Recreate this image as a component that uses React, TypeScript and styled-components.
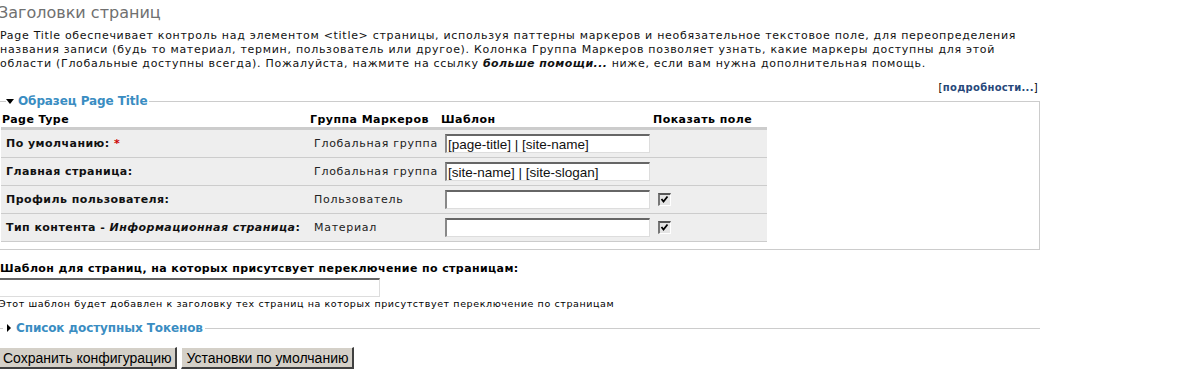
import React from 'react';
import styled, { createGlobalStyle } from 'styled-components';

const GlobalStyle = createGlobalStyle`
  body {
    margin: 0;
    background: #fff;
    color: #000;
    font-family: "DejaVu Sans", Verdana, sans-serif;
    font-size: 11px;
    letter-spacing: 0.7px;
  }

  b, strong, th {
    letter-spacing: 0.45px;
  }
`;

const Page = styled.div`
  width: 1042px;
  margin-left: -2px;
`;

const Title = styled.h2`
  margin: 0;
  padding-top: 3px;
  font-size: 16px;
  line-height: 20px;
  font-weight: normal;
  letter-spacing: 0;
  color: #707070;
`;

const Intro = styled.p`
  margin: 6px 0 0 2px;
  line-height: 14px;
  color: #111;
`;

const MoreRow = styled.div`
  margin-top: 10px;
  text-align: right;
  font-size: 10px;
  line-height: 13px;
  letter-spacing: 0.3px;
  padding-right: 2px;

  a {
    color: #27487a;
    font-weight: bold;
    text-decoration: none;
  }
`;

const Fieldset = styled.fieldset<{ $collapsed?: boolean }>`
  margin: ${(p) => (p.$collapsed ? '11px 0 0 0' : '0')};
  padding: ${(p) => (p.$collapsed ? '0' : '4px 2px 7px 2px')};
  border: 1px solid #ccc;
  border-width: ${(p) => (p.$collapsed ? '1px 0 0 0' : '1px')};
  min-width: 0;
`;

const Legend = styled.legend`
  margin-left: 5px;
  padding: 0 2px 0 0;
  font-size: 12px;
  line-height: 14px;
  font-weight: bold;
  letter-spacing: -0.1px;
  color: #3a8dc2;
  display: flex;
  align-items: center;
  gap: 4px;
`;

const Arrow = styled.span<{ $open?: boolean }>`
  display: inline-block;
  width: 0;
  height: 0;
  ${(p) =>
    p.$open
      ? `border-left: 4px solid transparent;
         border-right: 4px solid transparent;
         border-top: 5px solid #000;`
      : `border-top: 4px solid transparent;
         border-bottom: 4px solid transparent;
         border-left: 4px solid #000;
         margin-left: 4px;
         margin-right: 1px;`}
`;

const Table = styled.table`
  table-layout: fixed;
  border-collapse: collapse;
  width: 766px;
`;

const Th = styled.th`
  text-align: left;
  font-weight: bold;
  padding: 0 0 0 1px;
  height: 15px;
  line-height: 15px;
  border-bottom: 3px solid #ccc;
  white-space: nowrap;
`;

const Row = styled.tr`
  background: #eee;
  border-bottom: 1px solid #ccc;
`;

const Td = styled.td<{ $label?: boolean }>`
  height: 27px;
  padding: 0 0 0 5px;
  vertical-align: middle;
  white-space: nowrap;
  font-weight: ${(p) => (p.$label ? 'bold' : 'normal')};
  letter-spacing: ${(p) => (p.$label ? '0.45px' : '0.7px')};
  color: ${(p) => (p.$label ? '#111' : '#222')};
`;

const Required = styled.span`
  color: #c00;
`;

const TextInput = styled.input<{ $width: number }>`
  box-sizing: border-box;
  width: ${(p) => p.$width}px;
  height: 19px;
  padding: 0 1px;
  margin: 0;
  border-style: solid;
  border-width: 2px 1px 1px 2px;
  border-color: #666 #ddd #ddd #888;
  background: #fff;
  font-family: "Liberation Sans", Arial, sans-serif;
  font-size: 13.5px;
  letter-spacing: 0;
  color: #111;
  outline: none;
`;

const Check = styled.span`
  display: inline-block;
  box-sizing: border-box;
  width: 13px;
  height: 13px;
  margin-left: 1px;
  border-style: solid;
  border-width: 2px 1px 1px 2px;
  border-color: #555 #fff #fff #777;
  background: #e4e4e4;
  vertical-align: middle;

  svg {
    display: block;
  }
`;

const FormItem = styled.div`
  margin-top: 12px;
`;

const Label = styled.label`
  display: block;
  font-weight: bold;
  letter-spacing: 0.4px;
  line-height: 14px;
  margin-left: 2px;
`;

const Description = styled.div`
  font-size: 9.5px;
  letter-spacing: 0.6px;
  line-height: 12px;
  margin: 1px 0 0 1px;
`;

const Actions = styled.div`
  margin-top: 12px;
  display: flex;
  gap: 4px;
`;

const Button = styled.button`
  box-sizing: border-box;
  height: 22px;
  padding: 0 4px;
  margin: 0;
  background: #d4d0c8;
  border-style: solid;
  border-width: 1px 2px 2px 1px;
  border-color: #fff #404040 #404040 #fff;
  font-family: "Liberation Sans", Arial, sans-serif;
  font-size: 14px;
  letter-spacing: 0;
  color: #000;
`;

const CheckBox = () => (
  <Check>
    <svg width="9" height="9" viewBox="0 0 9 9">
      <path d="M1.5 4 L3.5 6.5 L7.5 1.5" fill="none" stroke="#000" strokeWidth="1.8" />
    </svg>
  </Check>
);

const rows = [
  { label: <>По умолчанию: <Required>*</Required></>, group: 'Глобальная группа', value: '[page-title] | [site-name]', check: false },
  { label: 'Главная страница:', group: 'Глобальная группа', value: '[site-name] | [site-slogan]', check: false },
  { label: 'Профиль пользователя:', group: 'Пользователь', value: '', check: true },
  { label: <>Тип контента - <i>Информационная страница</i>:</>, group: 'Материал', value: '', check: true },
];

export default function App() {
  return (
    <Page>
      <GlobalStyle />
      <Title>Заголовки страниц</Title>
      <Intro>
        Page Title обеспечивает контроль над элементом &lt;title&gt; страницы, используя паттерны маркеров и необязательное текстовое поле, для переопределения<br />
        названия записи (будь то материал, термин, пользователь или другое). Колонка Группа Маркеров позволяет узнать, какие маркеры доступны для этой<br />
        области (Глобальные доступны всегда). Пожалуйста, нажмите на ссылку <b><i>больше помощи...</i></b> ниже, если вам нужна дополнительная помощь.
      </Intro>
      <MoreRow>
        [<a href="#">подробности...</a>]
      </MoreRow>
      <Fieldset>
        <Legend>
          <Arrow $open />
          Образец Page Title
        </Legend>
        <Table>
          <colgroup>
            <col style={{ width: 308 }} />
            <col style={{ width: 131 }} />
            <col style={{ width: 212 }} />
            <col style={{ width: 115 }} />
          </colgroup>
          <thead>
            <tr>
              <Th>Page Type</Th>
              <Th>Группа Маркеров</Th>
              <Th>Шаблон</Th>
              <Th>Показать поле</Th>
            </tr>
          </thead>
          <tbody>
            {rows.map((r, i) => (
              <Row key={i}>
                <Td $label>{r.label}</Td>
                <Td>{r.group}</Td>
                <Td>
                  <TextInput $width={205} defaultValue={r.value} />
                </Td>
                <Td>{r.check && <CheckBox />}</Td>
              </Row>
            ))}
          </tbody>
        </Table>
      </Fieldset>
      <FormItem>
        <Label>Шаблон для страниц, на которых присутсвует переключение по страницам:</Label>
        <TextInput $width={382} style={{ marginTop: 2 }} />
        <Description>Этот шаблон будет добавлен к заголовку тех страниц на которых присутствует переключение по страницам</Description>
      </FormItem>
      <Fieldset $collapsed>
        <Legend>
          <Arrow />
          Список доступных Токенов
        </Legend>
      </Fieldset>
      <Actions>
        <Button>Сохранить конфигурацию</Button>
        <Button>Установки по умолчанию</Button>
      </Actions>
    </Page>
  );
}
